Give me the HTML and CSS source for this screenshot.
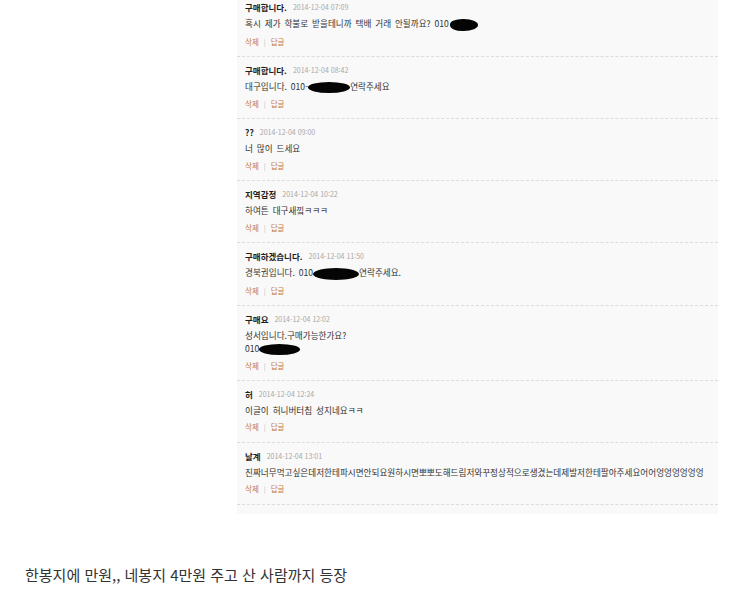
FILE: index.html
```html
<!DOCTYPE html>
<html lang="ko">
<head>
<meta charset="utf-8">
<link rel="stylesheet" href="styles.css">
</head>
<body>
<div class="board">
  <div class="entry first">
    <div class="head"><span class="name">구매합니다.</span><span class="date">2014-12-04 07:09</span></div>
    <div class="text">혹시 제가 학불로 받을테니까 택배 거래 안될까요? 010<span class="blob b1"></span></div>
    <div class="links"><span>삭제</span><span class="bar">|</span><span>답글</span></div>
  </div>
  <div class="entry">
    <div class="head"><span class="name">구매합니다.</span><span class="date">2014-12-04 08:42</span></div>
    <div class="text">대구입니다. 010-<span class="blob b2"></span>연락주세요</div>
    <div class="links"><span>삭제</span><span class="bar">|</span><span>답글</span></div>
  </div>
  <div class="entry">
    <div class="head"><span class="name">??</span><span class="date">2014-12-04 09:00</span></div>
    <div class="text">너 많이 드세요</div>
    <div class="links"><span>삭제</span><span class="bar">|</span><span>답글</span></div>
  </div>
  <div class="entry">
    <div class="head"><span class="name">지역감정</span><span class="date">2014-12-04 10:22</span></div>
    <div class="text">하여튼 대구새낔ㅋㅋㅋ</div>
    <div class="links"><span>삭제</span><span class="bar">|</span><span>답글</span></div>
  </div>
  <div class="entry">
    <div class="head"><span class="name">구매하겠습니다.</span><span class="date">2014-12-04 11:50</span></div>
    <div class="text">경북권입니다. 010<span class="blob b3"></span>연락주세요.</div>
    <div class="links"><span>삭제</span><span class="bar">|</span><span>답글</span></div>
  </div>
  <div class="entry">
    <div class="head"><span class="name">구매요</span><span class="date">2014-12-04 12:02</span></div>
    <div class="text">성서입니다.구매가능한가요?<br>010<span class="blob b4"></span></div>
    <div class="links"><span>삭제</span><span class="bar">|</span><span>답글</span></div>
  </div>
  <div class="entry">
    <div class="head"><span class="name">허</span><span class="date">2014-12-04 12:24</span></div>
    <div class="text">이글이 허니버터칩 성지네요ㅋㅋ</div>
    <div class="links"><span>삭제</span><span class="bar">|</span><span>답글</span></div>
  </div>
  <div class="entry">
    <div class="head"><span class="name">날계</span><span class="date">2014-12-04 13:01</span></div>
    <div class="text">진짜너무먹고싶은데저한테파시면안되요원하시면뽀뽀도해드림저와꾸정상적으로생겼는데제발저한테팔아주세요어어엉엉엉엉엉엉</div>
    <div class="links"><span>삭제</span><span class="bar">|</span><span>답글</span></div>
  </div>
</div>
<p class="caption">한봉지에 만원,, 네봉지 4만원 주고 산 사람까지 등장</p>
</body>
</html>
```

FILE: styles.css
```css
html, body {
  margin: 0;
  padding: 0;
  background: #ffffff;
}
body {
  font-family: "Noto Sans CJK KR", "Noto Sans", sans-serif;
  overflow: hidden;
}
.board {
  margin: -6px 0 0 237px;
  width: 481px;
  background: #f9f9f9;
  padding-bottom: 9px;
}
.entry {
  padding: 7px 8px 8.3px 8px;
  border-bottom: 1px dashed #dcdcdc;
  display: flex;
  flex-direction: column;
}
.head {
  height: 12px;
  line-height: 12px;
  display: flex;
  align-items: center;
  white-space: nowrap;
}
.name {
  font-size: 8.5px;
  font-weight: 700;
  color: #1e1e1e;
}
.date {
  font-size: 7px;
  color: #a8a8a8;
  margin-left: 6px;
}
.text {
  margin-top: 4px;
  font-size: 8.6px;
  line-height: 12.5px;
  color: #333;
  word-spacing: 1.5px;
  white-space: nowrap;
}
.blob {
  display: inline-block;
  background: #050505;
  border-radius: 50%;
  vertical-align: middle;
}
.b1 { width: 28px; height: 12px; margin-left: 1px; border-radius: 45% 50% 50% 45%; }
.b2 { width: 42px; height: 11px; }
.b3 { width: 46px; height: 12px; }
.b4 { width: 41px; height: 11px; }
.links {
  margin-top: 5px;
  height: 12px;
  line-height: 12px;
  font-size: 7.5px;
  color: #c6783f;
  display: flex;
  align-items: center;
}
.bar {
  color: #bbb;
  margin: 0 5px;
  font-size: 7px;
}
.caption {
  margin: 51px 0 0 25px;
  font-size: 15px;
  color: #333;
  line-height: 20px;
}
```
